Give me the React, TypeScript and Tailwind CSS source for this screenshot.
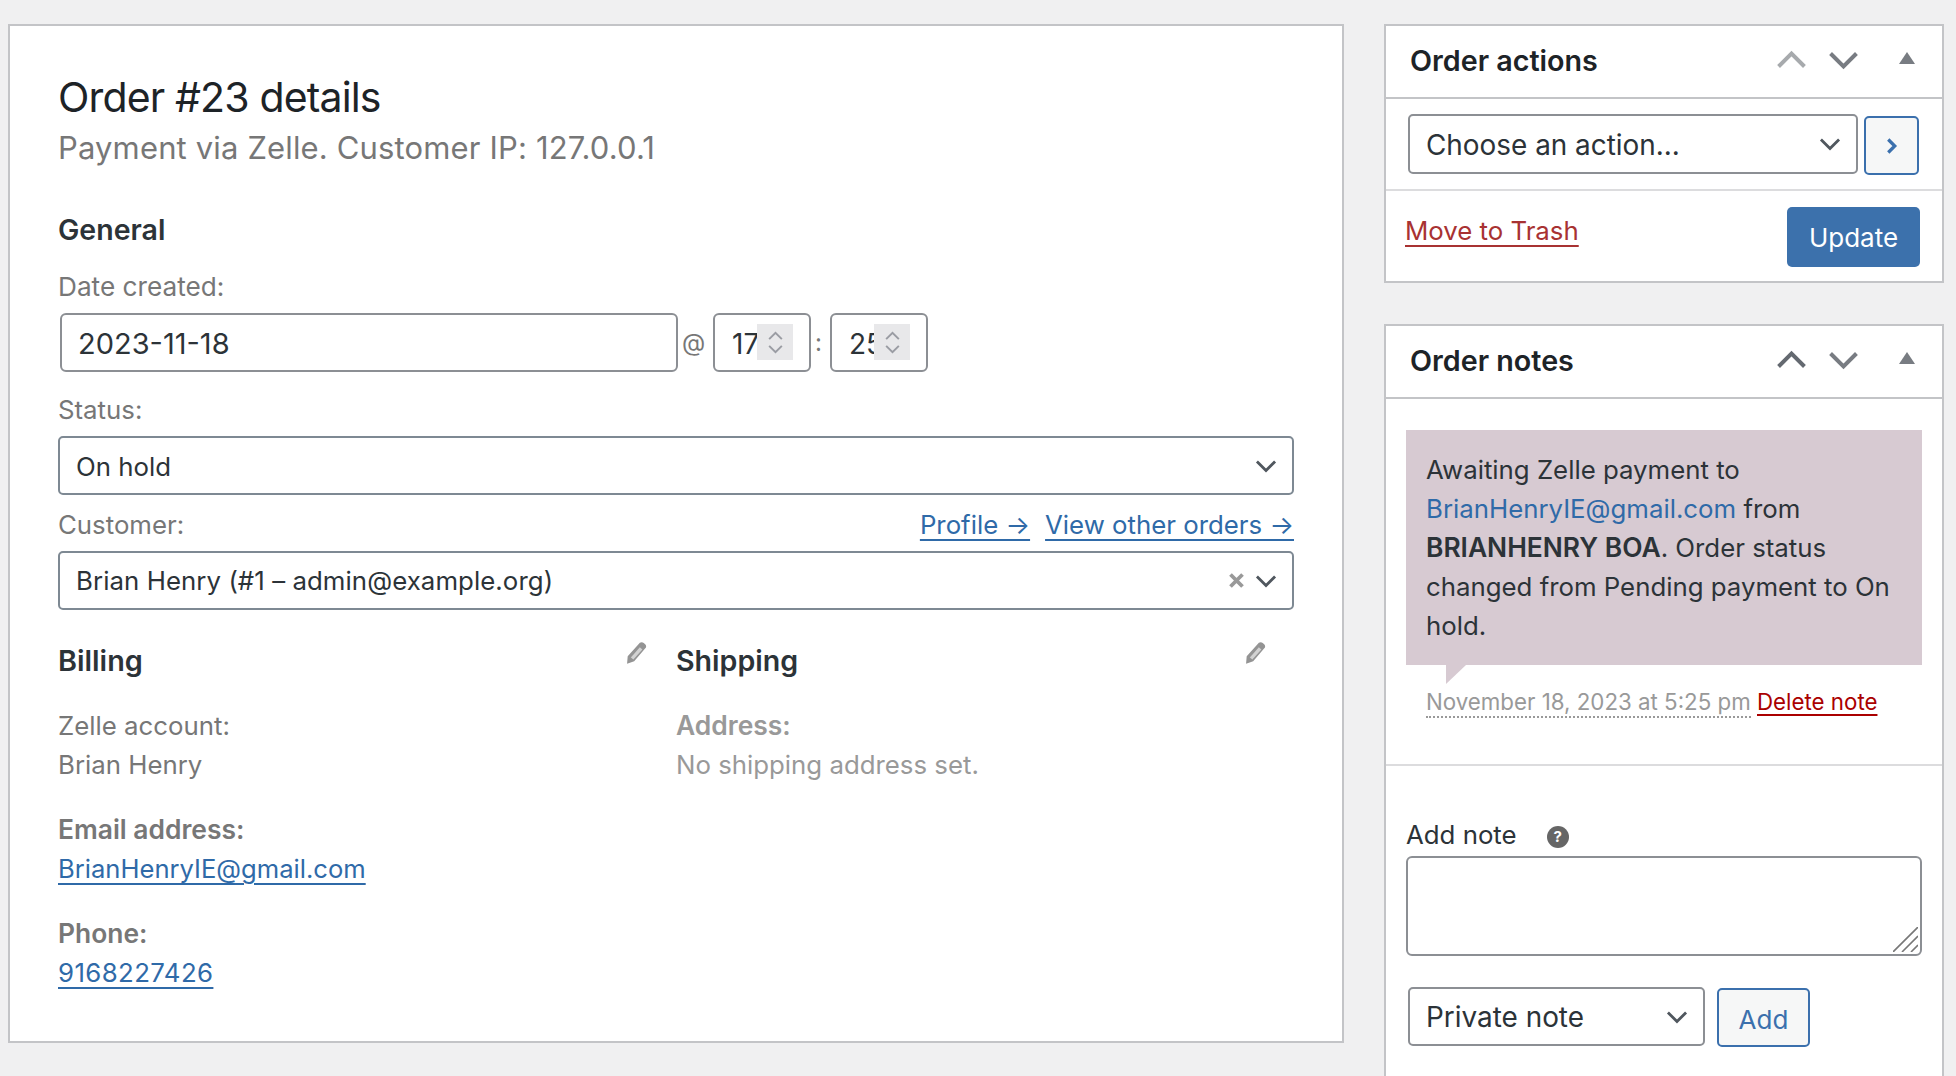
import React from "react";

const Chevron = ({ dir = "down", className = "" }: { dir?: "up" | "down" | "right"; className?: string }) => {
  const points = dir === "up" ? "2,14 13,3 24,14" : dir === "down" ? "2,3 13,14 24,3" : "4,2 12,10 4,18";
  const box = dir === "right" ? "0 0 16 20" : "0 0 26 17";
  return (
    <svg viewBox={box} className={className} fill="none" stroke="currentColor">
      <polyline points={points} strokeWidth={dir === "right" ? 4 : 3.4} />
    </svg>
  );
};

const Triangle = () => (
  <svg viewBox="0 0 16 12" className="w-4 h-3 text-[#787c82]" fill="currentColor">
    <polygon points="8,0 16,12 0,12" />
  </svg>
);

const Pencil = () => (
  <svg viewBox="0 0 20 21" className="w-[21px] h-[22px] mt-[1px]" fill="#949494">
    <path d="M13.2.8c1-.9 2.6-.9 3.7.1l1.4 1.3c1.1 1 1.2 2.6.3 3.6L7.8 18.3 1 20.8l.6-7.1z" />
    <path d="M13.2 5l2.4 2.1L7 16.8l-2.4-2.1z" fill="#d2d2d2" />
  </svg>
);

const Clear = () => (
  <svg viewBox="0 0 15 15" className="w-[15px] h-[15px] text-[#999]" stroke="currentColor" strokeWidth="3.8">
    <path d="M1.5 1.5l12 12M13.5 1.5l-12 12" />
  </svg>
);

function Select({ label, className = "" }: { label: string; className?: string }) {
  return (
    <div className={`flex items-center justify-between border-2 border-[#8c8f94] rounded-[5px] bg-white pl-[16px] pr-[15px] text-[#2c3338] ${className}`}>
      <span className="pt-[3px]">{label}</span>
      <Chevron className="w-[22px] h-[14px] text-[#50575e]" />
    </div>
  );
}

function TimeBox({ value, className = "" }: { value: string; className?: string }) {
  return (
    <div className={`relative h-[59px] w-[98px] border-2 border-[#8c8f94] rounded-[6px] pl-[17px] leading-[58px] text-[28px] text-[#2c3338] ${className}`}>
      {value}
      <div className="absolute top-[9px] right-[16px] w-9 h-9 bg-[#e8e8ea] flex flex-col items-center justify-center gap-[3px] text-[#9a9ca3]">
        <Chevron dir="up" className="w-[15px] h-[10px]" />
        <Chevron dir="down" className="w-[15px] h-[10px]" />
      </div>
    </div>
  );
}

function BoxHeader({ title, upClass }: { title: string; upClass: string }) {
  return (
    <div className="h-[73px] flex items-center border-b-2 border-[#c3c4c7] pl-[24px] pr-[27px]">
      <h2 className="flex-1 text-[28.7px] font-semibold text-[#1d2327] leading-none">{title}</h2>
      <Chevron dir="up" className={`w-[31px] h-[20px] mt-[-4px] ${upClass}`} />
      <Chevron dir="down" className="w-[31px] h-[20px] ml-[21px] mt-[-4px] text-[#787c82]" />
      <div className="ml-[40px] mt-[-7px]"><Triangle /></div>
    </div>
  );
}

export default function App() {
  return (
    <div className="h-screen overflow-hidden bg-[#f0f0f1] flex items-start pt-[24px] pl-[8px] [font-family:Inter,sans-serif] text-[25.8px]">
      {/* order data */}
      <div className="w-[1336px] h-[1019px] shrink-0 bg-white border-2 border-[#c3c4c7] pl-[48px] pr-[48px] pt-[47px]">
        <h1 className="text-[41px] tracking-[-0.85px] leading-[48px] text-[#1d2327]">Order #23 details</h1>
        <p className="mt-[7px] text-[31px] tracking-[0.15px] leading-[40px] text-[#777]">Payment via Zelle. Customer IP: 127.0.0.1</p>

        <h3 className="mt-[42px] text-[28.5px] leading-[40px] font-semibold text-[#2c3338]">General</h3>
        <div className="mt-[18px] leading-[38px] text-[26.2px] text-[#777]">Date created:</div>
        <div className="mt-[7px] flex items-center">
          <input
            readOnly
            value="2023-11-18"
            className="ml-[2px] w-[618px] h-[59px] border-2 border-[#8c8f94] rounded-[6px] pl-[16px] pt-[1px] text-[29px] text-[#2c3338] outline-none"
          />
          <span className="w-[35px] pl-[4px] text-[24px] text-[#777]">@</span>
          <TimeBox value="17" />
          <span className="w-[19px] pl-[4px] text-[24px] text-[#777]">:</span>
          <TimeBox value="25" />
        </div>

        <div className="mt-[19px] leading-[38px] text-[#777]">Status:</div>
        <Select label="On hold" className="mt-[7px] h-[59px] !border-[#7e8993]" />

        <div className="mt-[11px] flex items-center justify-between leading-[38px]">
          <span className="text-[#777]">Customer:</span>
          <div className="flex gap-[15px] text-[#2f6aa8]">
            <a href="#" className="underline decoration-2 underline-offset-[5px]">Profile →</a>
            <a href="#" className="underline decoration-2 underline-offset-[5px]">View other orders →</a>
          </div>
        </div>
        <div className="mt-[7px] h-[59px] flex items-center border-2 border-[#7e8993] rounded-[5px] pl-[16px] pr-[15px] text-[#2c3338]">
          <span className="flex-1 pt-[2px] tracking-[0.07px]">Brian Henry (#1 – admin@example.org)</span>
          <Clear />
          <Chevron className="ml-[11px] w-[22px] h-[14px] text-[#50575e]" />
        </div>

        <div className="mt-[31px] grid grid-cols-2">
          <div>
            <div className="flex justify-between items-start pr-[29px]">
              <h3 className="text-[28.8px] font-semibold leading-[40px] text-[#2c3338]">Billing</h3>
              <Pencil />
            </div>
            <div className="mt-[25px] leading-[39.3px] text-[#777]">Zelle account:</div>
            <div className="leading-[39.3px] text-[#777]">Brian Henry</div>
            <div className="mt-[25px] leading-[39.3px] text-[26.4px] font-semibold text-[#777]">Email address:</div>
            <a href="#" className="block leading-[39.3px] text-[25.6px] text-[#2f6aa8] underline decoration-2 underline-offset-[5px]">BrianHenryIE@gmail.com</a>
            <div className="mt-[26px] leading-[39.3px] text-[26.4px] font-semibold text-[#777]">Phone:</div>
            <a href="#" className="block leading-[39.3px] tracking-[0.4px] text-[#2f6aa8] underline decoration-2 underline-offset-[5px]">9168227426</a>
          </div>
          <div>
            <div className="flex justify-between items-start pr-[28px]">
              <h3 className="text-[28.6px] font-semibold leading-[40px] text-[#2c3338]">Shipping</h3>
              <Pencil />
            </div>
            <div className="mt-[25px] leading-[39.3px] text-[26.4px] font-semibold text-[#999]">Address:</div>
            <div className="leading-[39.3px] text-[#999]">No shipping address set.</div>
          </div>
        </div>
      </div>

      <div className="ml-[40px] w-[560px] shrink-0">
        {/* order actions */}
        <div className="h-[259px] bg-white border-2 border-[#c3c4c7]">
          <BoxHeader title="Order actions" upClass="text-[#a7aaad]" />
          <div className="h-[92px] flex items-start border-b-2 border-[#dcdcde] pl-[22px] pt-[15px]">
            <Select label="Choose an action..." className="w-[450px] h-[60px] text-[27.9px]" />
            <button className="ml-[6px] mt-[2px] w-[55px] h-[59px] border-2 border-[#3b70ad] rounded-[5px] bg-[#f6f7f7] flex items-center justify-center text-[#3b70ad]">
              <Chevron dir="right" className="w-[13px] h-[18px]" />
            </button>
          </div>
          <div className="flex items-start justify-between pl-[19px] pr-[22px] pt-[16px]">
            <a href="#" className="mt-[5px] leading-[38px] text-[#a83232] underline decoration-2 underline-offset-[5px]">Move to Trash</a>
            <button className="w-[133px] h-[60px] rounded-[5px] bg-[#3c71ac] text-white pt-[1px] text-[26px]">Update</button>
          </div>
        </div>

        {/* order notes */}
        <div className="mt-[41px] h-[800px] bg-white border-2 border-[#c3c4c7]">
          <BoxHeader title="Order notes" upClass="text-[#646970]" />
          <div className="border-b-2 border-[#dcdcde] pl-[20px] pr-[20px] pt-[31px] pb-[42px]">
            <div className="relative bg-[#d7cad2] pl-[20px] pt-[20px] pb-[20px] leading-[39px] text-[#2c3338]">
              Awaiting Zelle payment to
              <br />
              <a href="#" className="text-[#2f6aa8]">BrianHenryIE@gmail.com</a> from
              <br />
              <strong className="font-semibold text-[26.4px]">BRIANHENRY BOA</strong>. Order status
              <br />
              changed from Pending payment to On
              <br />
              hold.
              <span className="absolute top-full left-[40px] border-t-[19px] border-r-[20px] border-t-[#d7cad2] border-r-transparent" />
            </div>
            <div className="mt-[18px] pb-[1px] pl-[20px] leading-[38px] text-[22.3px]">
              <span className="text-[#999] border-b-2 border-dotted border-[#999] pb-[1px]">November 18, 2023 at 5:25 pm</span>{" "}
              <a href="#" className="text-[#a00] underline underline-offset-[4px]">Delete note</a>
            </div>
          </div>
          <div className="pl-[20px] pr-[20px] pt-[50px]">
            <div className="flex items-center leading-[38px] text-[#2c3338]">
              Add note
              <span className="ml-[30px] mt-[4px] w-[22px] h-[22px] rounded-full bg-[#666] text-white text-[15px] font-bold leading-[22px] text-center">?</span>
            </div>
            <div className="relative mt-[2px] h-[100px]">
              <textarea className="block w-full h-full resize-none border-2 border-[#8c8f94] rounded-[6px] outline-none" />
              <svg viewBox="0 0 25 25" className="absolute right-[4px] bottom-[4px] w-[25px] h-[25px] text-[#777]" stroke="currentColor" strokeWidth="1.6">
                <path d="M0 25L25 0M9 25L25 9M18 25L25 18" />
              </svg>
            </div>
            <div className="mt-[31px] flex items-start">
              <Select label="Private note" className="ml-[2px] w-[297px] h-[59px] text-[27.9px]" />
              <button className="ml-[12px] mt-[1px] w-[93px] h-[59px] border-2 border-[#3b70ad] rounded-[5px] bg-[#f6f7f7] text-[#3b70ad] pt-[3px] text-[26px]">Add</button>
            </div>
          </div>
        </div>
      </div>
    </div>
  );
}
